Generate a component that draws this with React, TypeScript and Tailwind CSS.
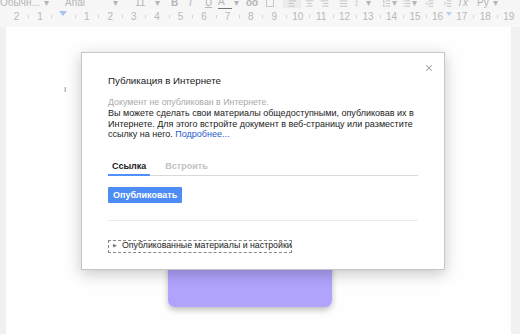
import { AlignLeft, AlignCenter, AlignRight, AlignJustify, List, ListOrdered, Indent, Outdent, X } from "lucide-react";

/* ---------- top toolbar (mostly cut off) ---------- */
function Toolbar() {
  return (
    <div className="h-[9px] overflow-hidden bg-[#f6f6f6]">
      <div className="-mt-[4px] flex items-center text-[10px] leading-[12px] text-[#b5b5b5]">
        <span className="w-[44px]">Обычн...</span>
        <span className="w-[21px]">▾</span>
        <span className="w-[48px]">Arial</span>
        <span className="w-[22px]">▾</span>
        <span className="w-[20px]">11</span>
        <span className="w-[16px]">▾</span>
        <span className="w-[18px] font-bold">B</span>
        <span className="w-[16px] italic">I</span>
        <span className="w-[13px] underline">U</span>
        <span className="w-[14px] border-b-2 border-[#777]">A</span>
        <span className="w-[14px] pl-[2px]">▾</span>
        <span className="w-[20px] font-bold">oo</span>
        <span className="w-[17px]"><span className="block h-[8px] w-[8px] border border-[#c5c5c5]" /></span>
        <span className="flex w-[18px] justify-center bg-[#ececec]"><AlignLeft size={9} /></span>
        <span className="flex w-[16px] justify-center"><AlignCenter size={9} /></span>
        <span className="flex w-[15px] justify-center"><AlignRight size={9} /></span>
        <span className="flex w-[22px] justify-center"><AlignJustify size={9} /></span>
        <span className="w-[12px]">↕</span>
        <span className="w-[14px]">▾</span>
        <span className="flex w-[12px] justify-center"><ListOrdered size={9} /></span>
        <span className="w-[8px]">▾</span>
        <span className="flex w-[12px] justify-center"><List size={9} /></span>
        <span className="w-[10px]">▾</span>
        <span className="flex w-[15px] justify-center"><Outdent size={9} /></span>
        <span className="flex w-[20px] justify-center"><Indent size={9} /></span>
        <span className="w-[20px] italic">Tx</span>
        <span className="w-[16px]">Ру</span>
        <span className="w-[10px]">▾</span>
      </div>
    </div>
  );
}

/* ---------- ruler ---------- */
const rulerMarks = ["2", "1", "", "1", "2", "3", "4", "5", "6", "7", "8", "9", "10", "11", "12", "13", "14", "15", "16", "17", "18", "19"];

function Ruler() {
  return (
    <div className="flex h-[18px] items-center bg-[#f7f7f7] pb-[3px] pl-[7px] text-[10px] text-[#b8b8b8]">
      {rulerMarks.map((m, i) => (
        <div key={i} className="flex w-[23.45px] shrink-0 items-center">
          <span className="flex w-[19px] justify-center">
            {m === "" ? (
              <span className="mt-[-6px] block h-0 w-0 border-x-[4px] border-t-[5px] border-x-transparent border-t-[#a8c2f0]" />
            ) : (
              m
            )}
          </span>
          {i === 18 ? (
            <span className="mt-[-6px] block h-0 w-0 border-x-[3px] border-t-[4px] border-x-transparent border-t-[#b9cdf2]" />
          ) : (
            <span className="ml-[2px] block h-[3px] w-px bg-[#d2d2d2]" />
          )}
        </div>
      ))}
    </div>
  );
}

/* ---------- publish dialog ---------- */
function PublishDialog() {
  return (
    <div className="absolute left-[81px] top-[52px] h-[218px] w-[364px] border border-[#c6c6c6] bg-white px-[26px] shadow-[0_4px_14px_rgba(0,0,0,0.22)]">
      <X size={10} strokeWidth={2.5} className="absolute right-[10px] top-[10px] text-[#a0a0a0]" />

      <h2 className="mt-[22px] text-[9.75px] leading-[12px] text-[#222]">Публикация в Интернете</h2>

      <p className="mt-[10px] text-[8.8px] leading-[11px] text-[#aaa]">Документ не опубликован в Интернете.</p>

      <p className="mt-0 whitespace-nowrap text-[9px] leading-[10.5px] text-[#222]">
        Вы можете сделать свои материалы общедоступными, опубликовав их в
        <br />
        Интернете. Для этого встройте документ в веб-страницу или разместите
        <br />
        ссылку на него. <span className="text-[#1d5ccc]">Подробнее...</span>
      </p>

      <div className="mt-[21px] flex border-b border-[#d9d9d9] text-[9px] font-bold leading-[11px]">
        <span className="-mb-px border-b-2 border-[#4d90fe] px-[4px] pb-[2px] text-[#222]">Ссылка</span>
        <span className="ml-[15px] pb-[2px] text-[#c2c2c2]">Встроить</span>
      </div>

      <button className="mt-[11px] h-[16px] rounded-[1px] bg-[#4d8cf4] px-[5px] text-[9px] font-bold leading-[16px] text-white">
        Опубликовать
      </button>

      <div className="mt-[15px] border-t border-[#ebebeb]" />

      <div className="mt-[19px] flex h-[13px] w-[184px] items-center border border-dashed border-[#888] text-[8.8px] text-[#222]">
        <span className="ml-[4px] mr-[5px] text-[5px] text-[#777]">▶</span>
        <span className="whitespace-nowrap">Опубликованные материалы и настройки</span>
      </div>
    </div>
  );
}

export default function App() {
  return (
    <div className="relative h-[334px] w-[520px] overflow-hidden bg-[#f1f1f1] font-['Liberation_Sans',Arial,sans-serif]">
      <Toolbar />
      <Ruler />

      {/* document page */}
      <div className="ml-[6px] h-[307px] w-[505px] bg-[#fefefe]">
        <div className="ml-[58px] pt-[59px] text-[8px] leading-[8px] text-[#777]">I</div>
        <div className="ml-[162px] mt-[135px] h-[78px] w-[164px] rounded-[7px] bg-[#afa3fc] shadow-[0_3px_6px_rgba(0,0,0,0.25)]" />
      </div>

      <PublishDialog />
    </div>
  );
}
